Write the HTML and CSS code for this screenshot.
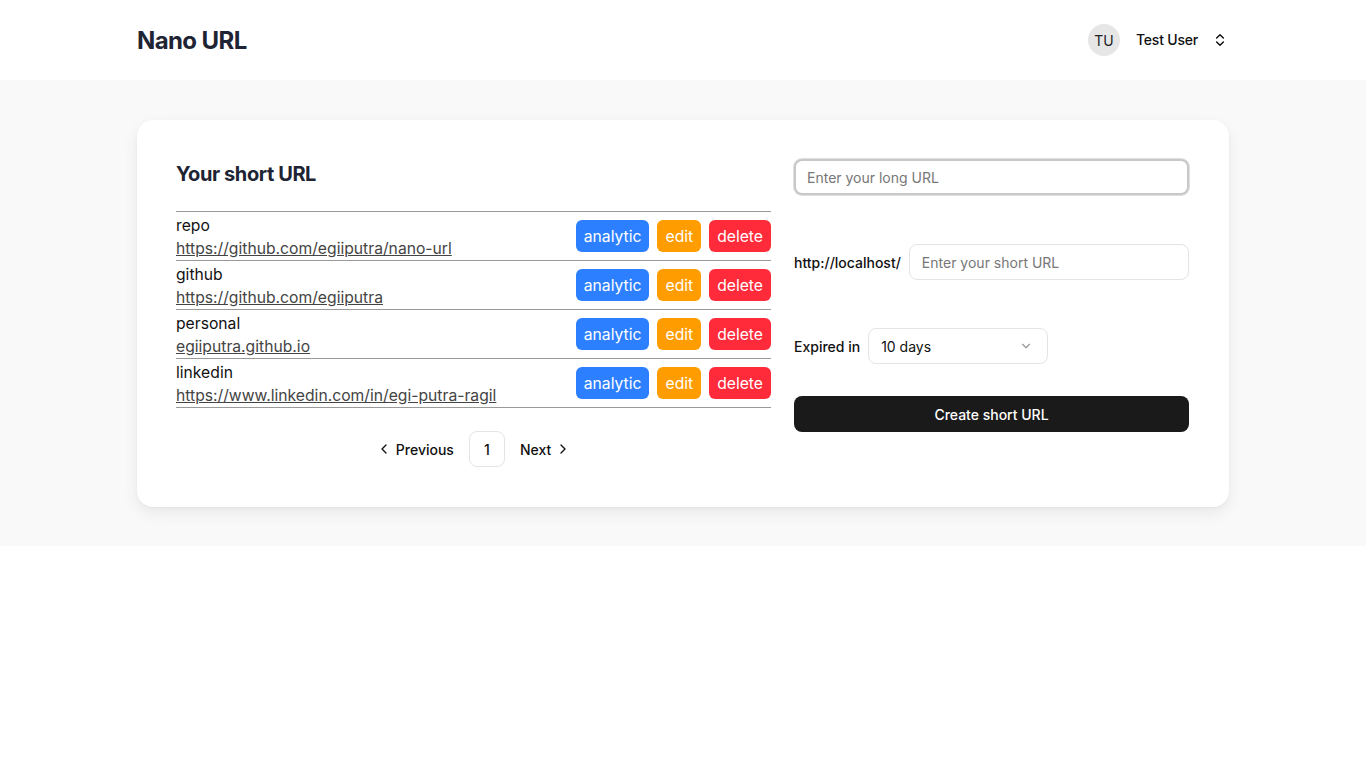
FILE: index.html
```html
<!DOCTYPE html>
<html>
<head>
  <title>Nano URL</title>
  <link rel="stylesheet" href="styles.css">
</head>
<body>
  <header class="topbar">
    <div class="container topbar-inner">
      <div class="brand">Nano URL</div>
      <div class="user">
        <span class="avatar">TU</span>
        <span class="user-name">Test User</span>
        <svg class="chev" width="16" height="16" viewBox="0 0 24 24" fill="none" stroke="#111" stroke-width="2.2" stroke-linecap="round" stroke-linejoin="round"><path d="M7 15l5 5 5-5"/><path d="M7 9l5-5 5 5"/></svg>
      </div>
    </div>
  </header>

  <main class="main">
    <div class="container">
      <div class="card">
        <section class="list-col">
          <h2 class="title">Your short URL</h2>
          <div class="rows">
            <div class="row">
              <div class="info">
                <div class="name">repo</div>
                <a class="link" href="#">https://github.com/egiiputra/nano-url</a>
              </div>
              <div class="actions">
                <button class="btn blue">analytic</button>
                <button class="btn orange">edit</button>
                <button class="btn red">delete</button>
              </div>
            </div>
            <div class="row">
              <div class="info">
                <div class="name">github</div>
                <a class="link" href="#">https://github.com/egiiputra</a>
              </div>
              <div class="actions">
                <button class="btn blue">analytic</button>
                <button class="btn orange">edit</button>
                <button class="btn red">delete</button>
              </div>
            </div>
            <div class="row">
              <div class="info">
                <div class="name">personal</div>
                <a class="link" href="#">egiiputra.github.io</a>
              </div>
              <div class="actions">
                <button class="btn blue">analytic</button>
                <button class="btn orange">edit</button>
                <button class="btn red">delete</button>
              </div>
            </div>
            <div class="row">
              <div class="info">
                <div class="name">linkedin</div>
                <a class="link" href="#">https://www.linkedin.com/in/egi-putra-ragil</a>
              </div>
              <div class="actions">
                <button class="btn blue">analytic</button>
                <button class="btn orange">edit</button>
                <button class="btn red">delete</button>
              </div>
            </div>
          </div>
          <nav class="pager">
            <span class="pg-link">
              <svg width="16" height="16" viewBox="0 0 24 24" fill="none" stroke="#111" stroke-width="2" stroke-linecap="round" stroke-linejoin="round"><path d="M15 18l-6-6 6-6"/></svg>
              Previous
            </span>
            <span class="pg-num">1</span>
            <span class="pg-link">
              Next
              <svg width="16" height="16" viewBox="0 0 24 24" fill="none" stroke="#111" stroke-width="2" stroke-linecap="round" stroke-linejoin="round"><path d="M9 18l6-6-6-6"/></svg>
            </span>
          </nav>
        </section>

        <section class="form-col">
          <input class="input long focus" type="text" placeholder="Enter your long URL">
          <div class="field first">
            <label class="label">http://localhost/</label>
            <input class="input" type="text" placeholder="Enter your short URL">
          </div>
          <div class="field">
            <label class="label">Expired in</label>
            <div class="select">
              <span>10 days</span>
              <svg width="14" height="14" viewBox="0 0 24 24" fill="none" stroke="#999" stroke-width="2" stroke-linecap="round" stroke-linejoin="round"><path d="M6 9l6 6 6-6"/></svg>
            </div>
          </div>
          <button class="create">Create short URL</button>
        </section>
      </div>
    </div>
  </main>
</body>
</html>
```

FILE: styles.css
```css
body {
  margin: 0;
  font-family: Inter, "Noto Sans", sans-serif;
  color: #111;
  background-color: #fff;
}

.container {
  width: 1092px;
  margin: 0 auto;
}

.topbar {
  height: 80px;
  background-color: #fff;
}

.topbar-inner {
  display: flex;
  align-items: center;
  justify-content: space-between;
  height: 80px;
}

.brand {
  font-size: 24px;
  font-weight: 700;
  color: #1e2433;
  letter-spacing: -0.6px;
}

.user {
  display: flex;
  align-items: center;
  font-size: 14px;
  font-weight: 500;
  margin-right: 1px;
}

.avatar {
  width: 32px;
  height: 32px;
  border-radius: 50%;
  background-color: #e6e6e6;
  display: flex;
  align-items: center;
  justify-content: center;
  font-size: 14px;
  font-weight: 400;
  color: #222;
  margin-right: 16px;
}

.user-name {
  margin-right: 14px;
  margin-top: -2px;
  letter-spacing: -0.2px;
}

.main {
  background-color: #f9f9f9;
  padding: 40px 0 39px;
}

.card {
  display: flex;
  gap: 23px;
  background-color: #fff;
  border-radius: 16px;
  padding: 39px 39px 40px;
  box-shadow: 0 6px 16px rgba(0, 0, 0, 0.07), 0 1px 3px rgba(0, 0, 0, 0.04);
}

.list-col {
  width: 595px;
}

.title {
  margin: 1px 0 0;
  height: 51px;
  font-size: 20px;
  font-weight: 700;
  color: #1e2433;
  letter-spacing: -0.4px;
  line-height: 28px;
}

.rows {
  border-top: 1px solid #999;
}

.row {
  display: flex;
  align-items: center;
  justify-content: space-between;
  height: 48px;
  border-bottom: 1px solid #999;
}

.info {
  font-size: 15.7px;
  line-height: 23px;
  margin-top: 2px;
}

.name {
  color: #111;
}

.link {
  color: #444;
  text-decoration: underline;
}

.actions {
  display: flex;
  gap: 8px;
}

.btn {
  height: 32px;
  padding: 0 8px;
  border: none;
  border-radius: 6px;
  color: #fff;
  font-family: Inter, "Noto Sans", sans-serif;
  font-size: 15.7px;
  cursor: pointer;
}

.blue {
  background-color: #2c80ff;
}

.orange {
  background-color: #ff9d00;
}

.red {
  background-color: #ff2a3a;
}

.pager {
  display: flex;
  justify-content: center;
  align-items: center;
  gap: 15px;
  margin-top: 23px;
  font-size: 14px;
  font-weight: 500;
}

.pg-link {
  display: flex;
  align-items: center;
  gap: 4px;
}

.pg-num {
  width: 34px;
  height: 34px;
  border: 1px solid #e4e4e4;
  border-radius: 8px;
  display: flex;
  align-items: center;
  justify-content: center;
}

.form-col {
  width: 395px;
  display: flex;
  flex-direction: column;
}

.input {
  height: 36px;
  box-sizing: border-box;
  border: 1px solid #e4e4e4;
  border-radius: 8px;
  padding: 0 12px;
  font-family: Inter, "Noto Sans", sans-serif;
  font-size: 14px;
  color: #111;
  flex: 1;
  outline: none;
}

.input::placeholder {
  color: #777;
}

.long {
  width: 100%;
  flex: none;
}

.focus {
  border: 2px solid #c8c8c8;
  box-shadow: 0 0 0 1px #e0e0e0;
  padding-left: 11px;
}

.field {
  display: flex;
  align-items: center;
  gap: 8px;
  margin-top: 48px;
}

.field.first {
  margin-top: 49px;
}

.label {
  font-size: 14px;
  font-weight: 500;
}

.select {
  width: 180px;
  height: 36px;
  box-sizing: border-box;
  border: 1px solid #e4e4e4;
  border-radius: 8px;
  padding: 0 14px 0 12px;
  display: flex;
  align-items: center;
  justify-content: space-between;
  font-size: 14px;
}

.create {
  margin-top: 32px;
  height: 36px;
  border: none;
  border-radius: 8px;
  background-color: #1a1a1a;
  color: #fff;
  font-family: Inter, "Noto Sans", sans-serif;
  font-size: 14px;
  font-weight: 500;
}
```
